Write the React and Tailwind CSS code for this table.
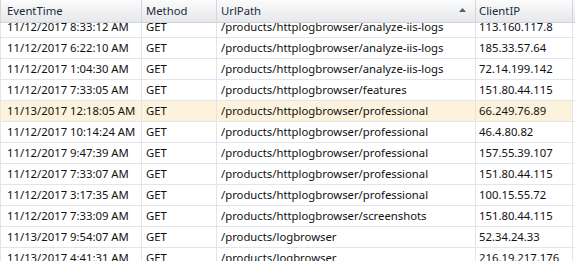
import React from "react";

const rows = [
  ["11/12/2017 8:33:12 AM", "GET", "/products/httplogbrowser/analyze-iis-logs", "113.160.117.8"],
  ["11/12/2017 6:22:10 AM", "GET", "/products/httplogbrowser/analyze-iis-logs", "185.33.57.64"],
  ["11/12/2017 1:04:30 AM", "GET", "/products/httplogbrowser/analyze-iis-logs", "72.14.199.142"],
  ["11/12/2017 7:33:05 AM", "GET", "/products/httplogbrowser/features", "151.80.44.115"],
  ["11/13/2017 12:18:05 AM", "GET", "/products/httplogbrowser/professional", "66.249.76.89", true],
  ["11/12/2017 10:14:24 AM", "GET", "/products/httplogbrowser/professional", "46.4.80.82"],
  ["11/12/2017 9:47:39 AM", "GET", "/products/httplogbrowser/professional", "157.55.39.107"],
  ["11/12/2017 7:33:07 AM", "GET", "/products/httplogbrowser/professional", "151.80.44.115"],
  ["11/12/2017 3:17:35 AM", "GET", "/products/httplogbrowser/professional", "100.15.55.72"],
  ["11/12/2017 7:33:09 AM", "GET", "/products/httplogbrowser/screenshots", "151.80.44.115"],
  ["11/13/2017 9:54:07 AM", "GET", "/products/logbrowser", "52.34.24.33"],
  ["11/13/2017 4:41:31 AM", "GET", "/products/logbrowser", "216.19.217.176"],
];

const cols = "grid grid-cols-[142px_75px_259px_97px_2px]";

export default function App() {
  return (
    <div
      className="w-[575px] h-[261px] overflow-hidden bg-white flex flex-col text-[11.3px] text-[#111]"
      style={{ fontFamily: '"Noto Sans", "Open Sans", sans-serif' }}
    >
      <div className={`${cols} h-[23px] shrink-0 bg-gradient-to-b from-[#fbfbfc] to-[#e6e8eb] border-b border-[#d0d4d9] text-[#1c2a3a] relative z-10`}>
        <div className="pl-[6px] flex items-center border-r border-l border-[#d3d6da]">EventTime</div>
        <div className="pl-[4px] flex items-center border-r border-[#d3d6da]">Method</div>
        <div className="pl-[4px] pr-[9px] flex items-center justify-between border-r border-[#d3d6da]">
          <span>UrlPath</span>
          <svg width="7" height="4" viewBox="0 0 7 4" className="mb-[2px]">
            <polygon points="0,4 7,4 3.5,0" fill="#55606c" />
          </svg>
        </div>
        <div className="pl-[3px] flex items-center border-r border-[#d3d6da]">ClientIP</div>
        <div />
      </div>
      <div className="flex-1 overflow-hidden">
        <div className="-mt-[6px]">
          {rows.map((r, i) => (
            <div
              key={i}
              className={`${cols} h-[21px] border-b border-[#e2e5ec] ${r[4] ? "bg-[#fdf3dc]" : ""}`}
            >
              <div className="pl-[6px] flex items-center border-r border-l border-[#e2e5ec] whitespace-nowrap overflow-hidden">{r[0]}</div>
              <div className="pl-[4px] flex items-center border-r border-[#e2e5ec] whitespace-nowrap overflow-hidden">{r[1]}</div>
              <div className="pl-[4px] flex items-center border-r border-[#e2e5ec] whitespace-nowrap overflow-hidden">{r[2]}</div>
              <div className="pl-[3px] flex items-center border-r border-[#e2e5ec] whitespace-nowrap overflow-hidden">{r[3]}</div>
              <div className="bg-white" />
            </div>
          ))}
        </div>
      </div>
    </div>
  );
}
